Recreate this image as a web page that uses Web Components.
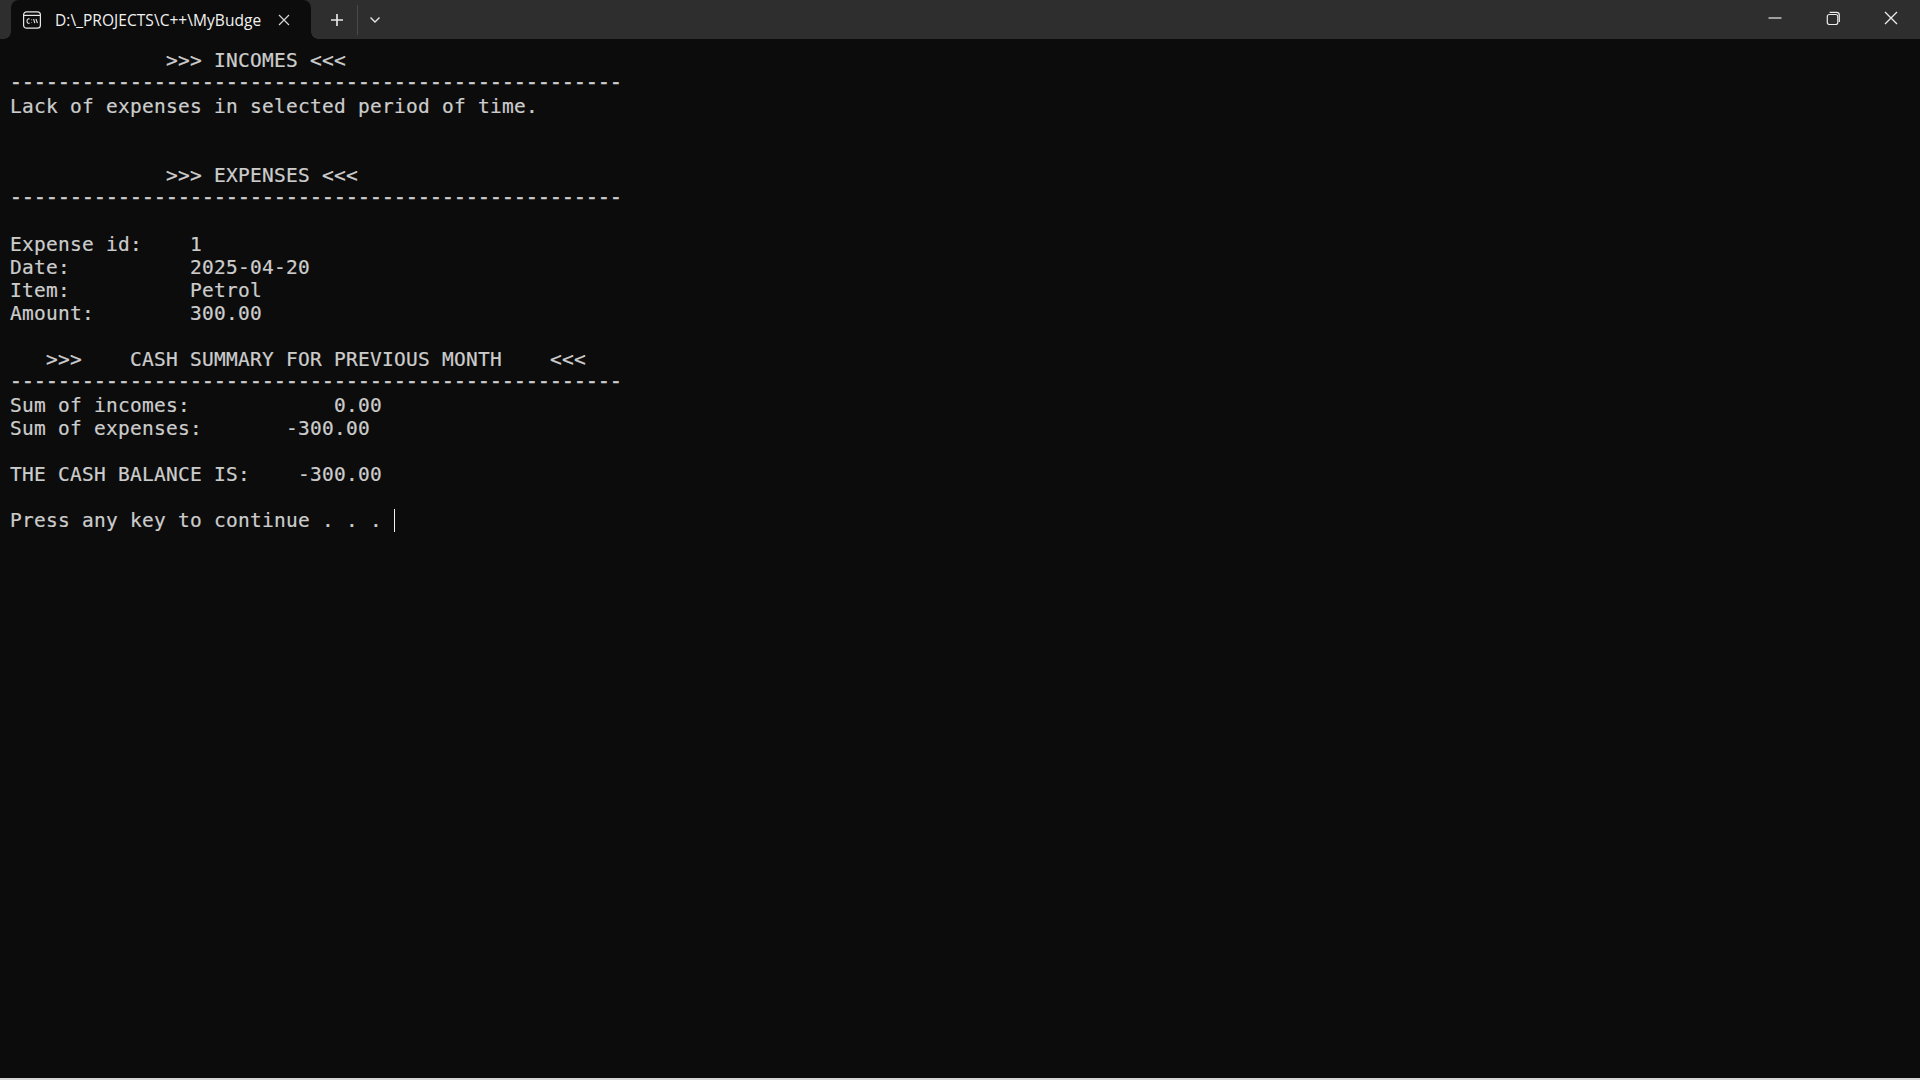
<!DOCTYPE html>
<html>
<head>
<meta charset="utf-8">
<title>Terminal</title>
<style>
  html, body { margin: 0; height: 100%; background: #0c0c0c; overflow: hidden; }
  /* the ruler rows sit a bit higher and heavier than a plain hyphen of this font */
  term-screen .rule { display: inline-block; vertical-align: top; height: 23px; transform: translateY(-1px); -webkit-text-stroke: 0.6px #cccccc; }
</style>
</head>
<body>
<term-window>
  <tab-item slot="tab" title-text="D:\_PROJECTS\C++\MyBudge"></tab-item>
  <term-screen>             &gt;&gt;&gt; INCOMES &lt;&lt;&lt;
<span class="rule">---------------------------------------------------</span>
Lack of expenses in selected period of time.


             &gt;&gt;&gt; EXPENSES &lt;&lt;&lt;
<span class="rule">---------------------------------------------------</span>

Expense id:    1
Date:          2025-04-20
Item:          Petrol
Amount:        300.00

   &gt;&gt;&gt;    CASH SUMMARY FOR PREVIOUS MONTH    &lt;&lt;&lt;
<span class="rule">---------------------------------------------------</span>
Sum of incomes:            0.00
Sum of expenses:       -300.00

THE CASH BALANCE IS:    -300.00

Press any key to continue . . . </term-screen>
</term-window>

<script>
// window frame: tab strip on top, terminal below
class TermWindow extends HTMLElement {
  constructor() {
    super();
    this.attachShadow({ mode: 'open' });
    this.shadowRoot.innerHTML = `
      <style>
        :host { display: flex; flex-direction: column; height: 1078px; background: #0c0c0c; border-bottom: 2px solid #d8d8d8; }
        .bar { display: flex; align-items: stretch; height: 39px; flex: none; background: #2e2e2e; padding-left: 11px; }
        .buttons { display: flex; align-items: center; color: #e6e6e6; }
        .add { box-sizing: border-box; width: 46px; padding-left: 6px; display: flex; justify-content: center; }
        .sep { width: 1px; height: 30px; background: #484848; }
        .more { width: 33px; display: flex; justify-content: center; }
        .spacer { flex: 1; }
      </style>
      <div class="bar">
        <slot name="tab"></slot>
        <div class="buttons">
          <span class="add">
            <svg width="14" height="14" viewBox="0 0 14 14" fill="none" stroke="currentColor" stroke-width="1.7"><path d="M7 1v12M1 7h12"/></svg>
          </span>
          <span class="sep"></span>
          <span class="more">
            <svg width="12" height="8" viewBox="0 0 12 8" fill="none" stroke="currentColor" stroke-width="1.4"><path d="M1.5 1.5L6 6l4.500-4.500"/></svg>
          </span>
        </div>
        <div class="spacer"></div>
        <window-controls></window-controls>
      </div>
      <slot></slot>
    `;
  }
}

class TabItem extends HTMLElement {
  constructor() {
    super();
    this.attachShadow({ mode: 'open' });
    this.shadowRoot.innerHTML = `
      <style>
        :host { position: relative; display: flex; align-items: center; box-sizing: border-box; width: 300px; background: #0c0c0c; border-radius: 8px 8px 0 0; padding-left: 12px; color: #f2f2f2; }
        svg { flex: none; display: block; }
        .title { margin-left: 14px; width: 223px; font: 15.5px "Open Sans", sans-serif; letter-spacing: 0.05px; white-space: nowrap; overflow: hidden; }
        .close { flex: none; display: block; color: #d6d6d6; }
        /* small concave corners where the tab meets the terminal */
        .flare { position: absolute; bottom: 0; width: 7px; height: 7px; }
        .flare.l { left: -7px; background: radial-gradient(circle at top left, #2e2e2e 6.5px, #0c0c0c 7px); }
        .flare.r { left: 100%; background: radial-gradient(circle at top right, #2e2e2e 6.5px, #0c0c0c 7px); }
      </style>
      <span class="flare l"></span>
      <svg width="18" height="18" viewBox="0 0 18 18" fill="none" stroke="#e8e8e8" stroke-width="1.2">
        <rect x="0.6" y="0.8" width="16.8" height="16.4" rx="3"/>
        <path d="M1 4.4h16"/>
        <path d="M6.6 8.2c-.6-.5-2.6-.6-2.6 1.9s2 2.4 2.6 1.9M8.6 8.6v.6M8.600 11.400v.6M10.600 8l1.200 4.200M13 8l1.400 4.200" stroke-width="1.1"/>
      </svg>
      <span class="title"></span>
      <svg class="close" width="12" height="12" viewBox="0 0 12 12" fill="none" stroke="currentColor" stroke-width="1.2"><path d="M1 1l10 10M11 1L1 11"/></svg>
      <span class="flare r"></span>
    `;
    this.shadowRoot.querySelector('.title').textContent = this.getAttribute('title-text');
  }
}

class WindowControls extends HTMLElement {
  constructor() {
    super();
    this.attachShadow({ mode: 'open' });
    this.shadowRoot.innerHTML = `
      <style>
        :host { display: flex; align-items: center; color: #ececec; padding-bottom: 3px; }
        span { width: 58px; display: flex; justify-content: center; }
      </style>
      <span><svg width="14" height="14" viewBox="0 0 14 14" fill="none" stroke="currentColor" stroke-width="1.2"><path d="M.5 7h13"/></svg></span>
      <span><svg width="14" height="14" viewBox="0 0 14 14" fill="none" stroke="currentColor" stroke-width="1.2"><rect x="1.300" y="3.500" width="10.500" height="10" rx="2"/><path d="M3.600 1.300h7A2.700 2.700 0 0 1 13.300 4v7"/></svg></span>
      <span><svg width="14" height="14" viewBox="0 0 14 14" fill="none" stroke="currentColor" stroke-width="1.3"><path d="M1 1l12 12M13 1L1 13"/></svg></span>
    `;
  }
}

// terminal text grid, cursor sits right after the last character
class TermScreen extends HTMLElement {
  constructor() {
    super();
    this.attachShadow({ mode: 'open' });
    this.shadowRoot.innerHTML = `
      <style>
        :host { display: block; flex: 1; padding: 10px 10px 0; background: #0c0c0c; color: #cccccc; }
        pre { margin: 0; font: 19.5px/23px "DejaVu Sans Mono", monospace; letter-spacing: 0.26px; -webkit-text-stroke: 0.2px #cccccc; }
        .cursor { display: inline-block; width: 1px; height: 23px; margin-right: -1px; background: #f2f2f2; vertical-align: top; }
      </style>
      <pre><slot></slot><span class="cursor"></span></pre>
    `;
  }
}

customElements.define('term-window', TermWindow);
customElements.define('tab-item', TabItem);
customElements.define('window-controls', WindowControls);
customElements.define('term-screen', TermScreen);
</script>
</body>
</html>
